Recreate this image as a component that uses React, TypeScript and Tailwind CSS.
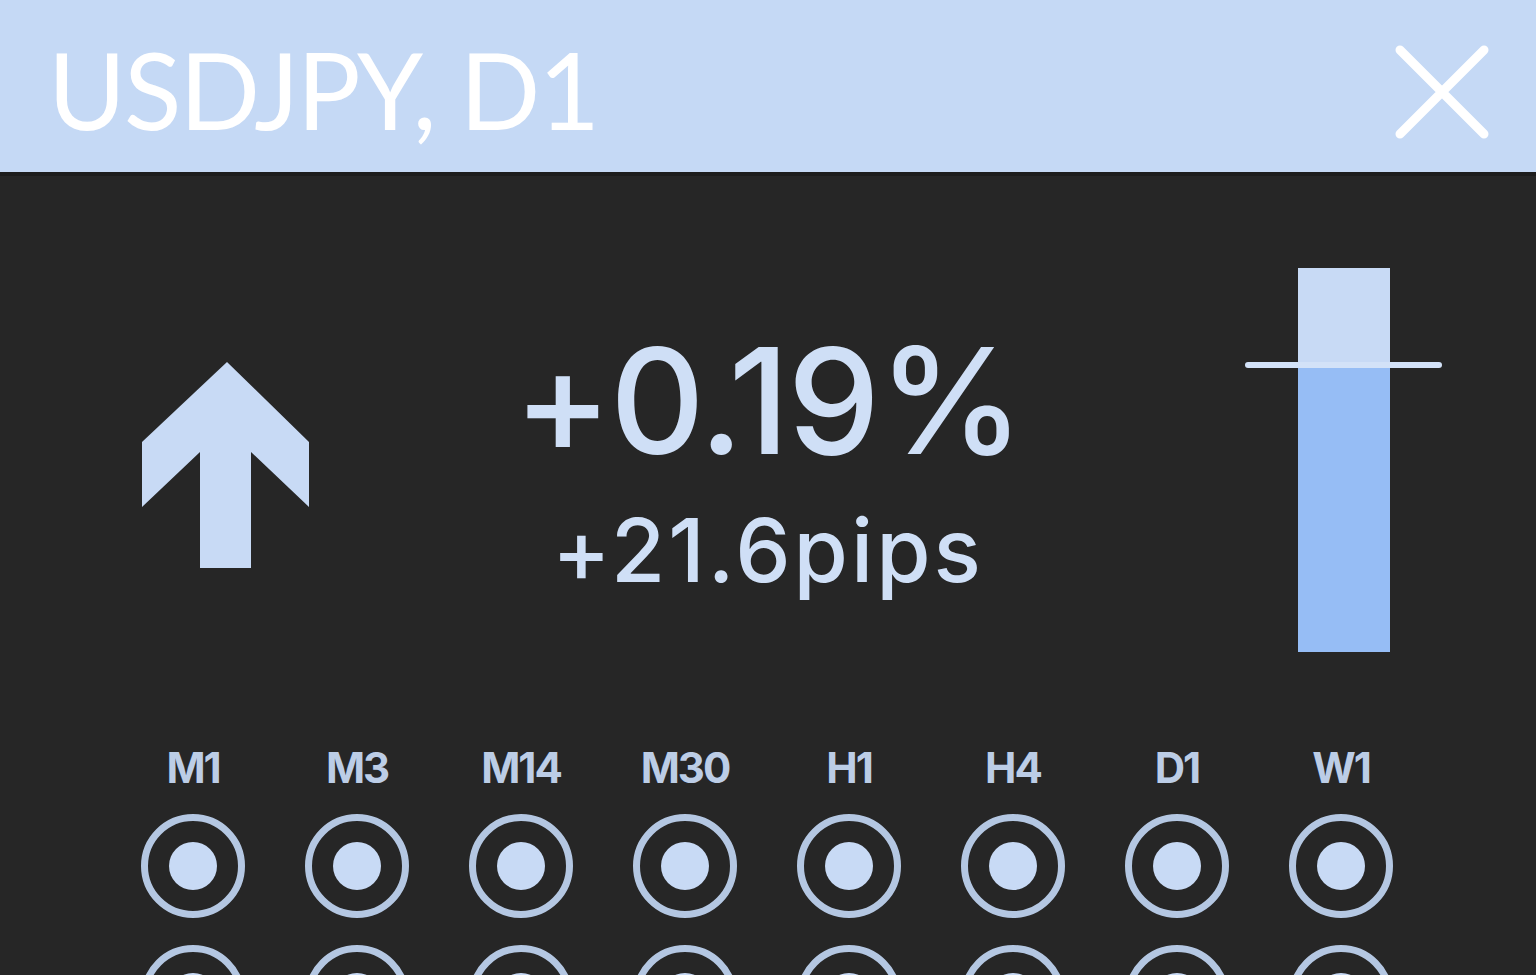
import React from 'react';

const frames = ['M1', 'M3', 'M14', 'M30', 'H1', 'H4', 'D1', 'W1'];

const Dot = () => (
    <div className="w-[104px] h-[104px] rounded-full border-[7px] border-[#b4c7e2] flex items-center justify-center">
        <div className="w-[48px] h-[48px] rounded-full bg-[#c8daf5]" />
    </div>
);

const App = () => {
    return (
        <div className="w-[1536px] h-[975px] overflow-hidden bg-[#262626] font-['Inter',sans-serif]">

            {/* --- HEADER --- */}
            <div className="h-[176px] bg-[#c5d9f5] flex items-center justify-between pl-[48px] pr-[46px] border-b-[4px] border-[#1d1d1d]">
                <span className="text-white text-[106px] leading-none font-['Lato',sans-serif] tracking-[-2px] pt-[6px]">
                    USDJPY, D1
                </span>
                <svg width="96" height="96" viewBox="0 0 96 96" className="mt-[11px]">
                    <path d="M6 6 L90 90 M90 6 L6 90" stroke="white" strokeWidth="9" strokeLinecap="round" />
                </svg>
            </div>

            {/* --- CHANGE ROW --- */}
            <div className="flex items-center h-[384px] mt-[92px] pl-[142px] pr-[94px]">
                <svg width="167" height="206" viewBox="0 0 167 206" className="mt-[10px]">
                    <polygon
                        points="85,0 167,80 167,145 109,90 109,206 58,206 58,90 0,145 0,80"
                        fill="#c8daf5"
                    />
                </svg>

                <div className="flex-1 flex flex-col items-center pr-[18px] text-[#cfdff6]">
                    <span className="text-[147px] leading-[150px] font-medium tracking-[-2px]">+0.19%</span>
                    <span className="text-[88px] leading-[90px] font-medium tracking-[3px] mt-[29px]">+21.6pips</span>
                </div>

                <div className="relative w-[197px] h-[384px] flex justify-center">
                    <div className="w-[92px] h-full flex flex-col">
                        <div className="h-[97px] bg-[#c8daf5]" />
                        <div className="flex-1 bg-[#96bdf5]" />
                    </div>
                    <div className="absolute left-0 right-0 top-[94px] h-[6px] rounded-full bg-[#d3e2f8]" />
                </div>
            </div>

            {/* --- TIMEFRAMES --- */}
            <div className="grid grid-cols-8 w-[1312px] ml-[111px] mt-[94px]">
                {frames.map((f) => (
                    <div key={f} className="flex flex-col items-center">
                        <span className="text-[42px] leading-[44px] font-bold text-[#bccde6] tracking-[-2px]">{f}</span>
                        <div className="mt-[24px]">
                            <Dot />
                        </div>
                        <div className="mt-[27px]">
                            <Dot />
                        </div>
                    </div>
                ))}
            </div>
        </div>
    );
};

export default App;
